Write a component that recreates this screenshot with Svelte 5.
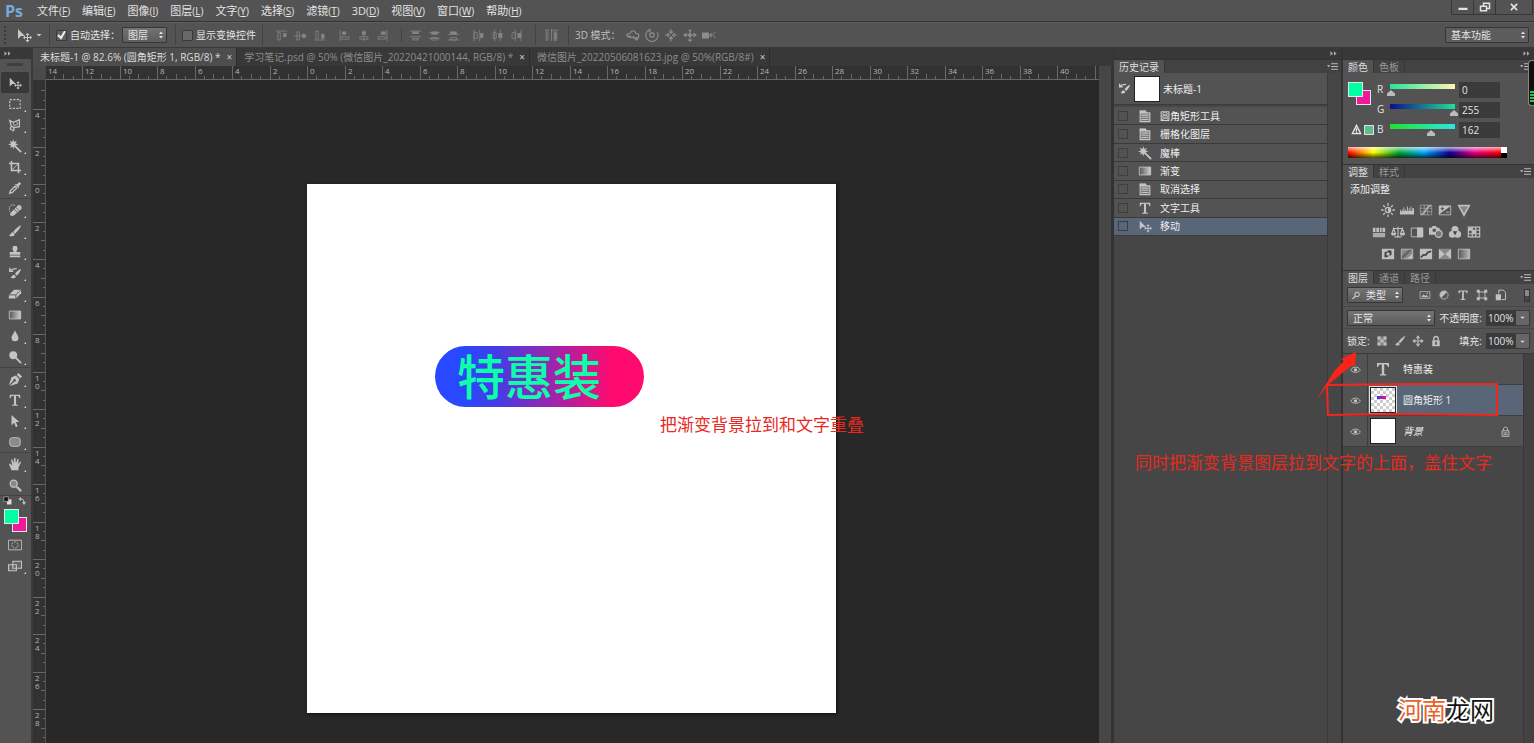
<script>
	const menus = [
		['文件', 'F'],
		['编辑', 'E'],
		['图像', 'I'],
		['图层', 'L'],
		['文字', 'Y'],
		['选择', 'S'],
		['滤镜', 'T'],
		['3D', 'D'],
		['视图', 'V'],
		['窗口', 'W'],
		['帮助', 'H']
	];

	const docs = [
		'未标题-1 @ 82.6% (圆角矩形 1, RGB/8) *',
		'学习笔记.psd @ 50% (微信图片_20220421000144, RGB/8) *',
		'微信图片_20220506081623.jpg @ 50%(RGB/8#)'
	];

	const toolGroups = [
		['move', 'marquee', 'lasso', 'wand', 'crop', 'dropper'],
		['heal', 'brush', 'stamp', 'historyBrush', 'eraser', 'gradient', 'drop', 'dodge'],
		['pen', 'type', 'pathSelect', 'roundRect'],
		['hand', 'zoom']
	];

	const alignGroups = [
		['alTop', 'alMid', 'alBottom'],
		['alLeft', 'alCenter', 'alRight'],
		['diTop', 'diMid', 'diBottom'],
		['diLeft', 'diCenter', 'diRight']
	];
	const modes3d = ['orbit', 'roll', 'pan', 'slide', 'camera'];

	const history = [
		['doc', '圆角矩形工具'],
		['doc', '栅格化图层'],
		['wand', '魔棒'],
		['gradient', '渐变'],
		['doc', '取消选择'],
		['type', '文字工具'],
		['move', '移动']
	];

	const adjustments = [
		['sun', 'levels', 'curves', 'exposure', 'vibrance'],
		['hue', 'balance', 'bw', 'photo', 'mixer', 'lookup'],
		['invert', 'posterize', 'threshold', 'selective', 'gradmap']
	];

	const filters = ['image', 'adjust', 'type', 'shape', 'smart'];
	const locks = ['checker', 'brush', 'cross', 'lock'];

	let channels = $state([
		{ name: 'R', value: 0, from: '#27e39a', to: '#fdf7b4' },
		{ name: 'G', value: 255, from: '#0a0f8c', to: '#1fe09b' },
		{ name: 'B', value: 162, from: '#1fe32d', to: '#2be8e0' }
	]);
	let activeDoc = $state(0);
	let activeTool = $state('move');
	let activeState = $state(6);
	let activeLayer = $state(1);

	// ruler scale: 75px for every four units
	const unit = 18.75;
	const hOrigin = 261;
	const vOrigin = 104;

	function ticks(origin, first, last) {
		const out = [];
		for (let i = first * 4; i <= last * 4; i++) {
			const pos = Math.round(origin + (i * unit) / 4);
			if (pos < -2) continue;
			const major = i % 8 === 0;
			const len = major ? 13 : i % 4 === 0 ? 5 : i % 2 === 0 ? 3 : 0;
			if (len) out.push({ pos, len, label: major && i < last * 4 ? String(Math.abs(i / 4)) : '' });
		}
		return out;
	}
	const hTicks = ticks(hOrigin, -14, 42);
	const vTicks = ticks(vOrigin, -5, 30);

	// every glyph is drawn on a 16 unit grid in currentColor
	const s = 'fill="none" stroke="currentColor"';
	const frame = `<path ${s} d="M1.5 3.5h13v9h-13z"/>`;
	const icons = {
		move: '<path d="M2 2v10l3-3h4z"/><path d="M11.500 6l-2 2h1.500v2H9V8.500L7 10.500l2 2V11h2v2H9.500l2 2.500 2-2.500H12v-2h2v1.500l2-2-2-2V10h-2V8h1.500z"/>',
		marquee: `<path ${s} stroke-width="1.300" stroke-dasharray="2.500 1.500" d="M2 3h12v10H2z"/>`,
		lasso: `<path ${s} stroke-width="1.500" d="M5 13c-3 1-3-2-1-3 3-1 4 4 1 5M4 10L2 3l4 2 7-3v8l-6 1"/><path ${s} d="M6 5l1 4 4-2-1-3"/>`,
		wand: `<path ${s} stroke-width="2" d="M7 7l8 8"/><path d="M6 0l1 3.500L10 2 8.500 5 12 6 8.500 7.500 10 10 7 8.500 6 12 5 8.500 2 10l1.500-2.500L0 6l3.500-1L2 2l3 1.500z"/>`,
		crop: `<path ${s} stroke-width="1.800" d="M4 1v11h11M1 4h11v11"/><path ${s} d="M5 11l7-7"/>`,
		dropper: `<path ${s} stroke-width="1.500" d="M2 14l1-3 5-5 2 2-5 5z"/><path d="M8 4l4 4 1-1-1-1 3-3-2-2-3 3-1-1z"/>`,
		heal: `<path ${s} stroke-dasharray="2 1" d="M8 3C4 0 0 4 2 10"/><path d="M3 11L11 3c2-2 6 1 4 4l-8 7c-3 2-6 0-4-3z"/><path stroke="#535353" d="M7 7l4 4M9 5l4 4"/>`,
		brush: '<path d="M15 1c-4 2-7 5-9 8l2 2c3-3 6-6 7-10zM5.500 9.500C3 9.500 4 12 1 13c3 2 7 1 6.500-1.500z"/>',
		stamp: '<path d="M6 1h4l1 3-1.500 4H14v3H2V8h4.500L5 4zM2 12h12v2H2z"/>',
		historyBrush: `<path d="M15 3c-3 1-6 4-7 6l2 2c2-2 4-4 5-8zM7 10c-2 0-2 2-4 3 2 2 6 1 6-1z"/><path ${s} stroke-width="1.500" d="M2 6c2-3 5-3 8-3M2 2v4h4"/>`,
		eraser: '<path d="M1 9l6-6h8v4l-6 6H1z"/><path stroke="#535353" fill="none" d="M1 9h8v4M9 9l6-6"/>',
		gradient: '<defs><linearGradient id="gr"><stop stop-color="#555"/><stop offset="1" stop-color="#d0d0d0"/></linearGradient></defs><path fill="url(#gr)" stroke="currentColor" d="M1.500 3.500h13v9h-13z"/>',
		drop: '<path d="M8 1c1 4 4 6 4 9a4 4 0 01-8 0c0-3 3-5 4-9z"/>',
		dodge: `<circle cx="6" cy="6" r="4.500"/><path ${s} stroke-width="2" d="M9 9l6 6"/>`,
		pen: '<path d="M1 15l3-9 5-2 4 4-2 5-9 3 5-5a1.500 1.500 0 10-1-1zM10 3l2-2 4 4-2 2z"/>',
		type: '<path d="M2 2h12v4h-1c-.5-2-1-2.800-3.800-2.800V13l2 .5v1H4.800v-1l2-.5V3.200C4 3.200 3.500 4 3 6H2z"/>',
		pathSelect: '<path d="M4 1v12l3-3 2 5 2-1-2-5h4z"/>',
		roundRect: '<rect x="2" y="3" width="12" height="10" rx="3" fill="#8a8a8a" stroke="currentColor"/>',
		hand: '<path d="M4 15L1 8l1.500-.5L5 10 3.500 3 5 2.500 6.500 7 7 1h1.500L9 7l2-5 1.300.5L11.500 8 14 5l1 .8L12 12v3z"/>',
		zoom: `<circle cx="6.500" cy="6.500" r="4" fill="#888" stroke="currentColor" stroke-width="1.500"/><path ${s} stroke-width="2.500" d="M10 10l5 5"/>`,
		doc: `<path fill="#777" stroke="currentColor" stroke-width="1.300" d="M2.500 2.500h6l1 2h4v10h-11z"/><path stroke="currentColor" stroke-width="1.200" d="M4 7h8M4 9.500h8M4 12h8"/><path d="M2 2h7l1 3H2z"/>`,
		alTop: `<path ${s} d="M1 2.500h14M3.500 4.500h3v9h-3z"/><path d="M10 5h4v5h-4z"/>`,
		alMid: `<path ${s} d="M0 8.500h16M3.500 3.500h3v10h-3z"/><path d="M10 6h4v5h-4z"/>`,
		alBottom: `<path ${s} d="M1 13.500h14M3.500 2.500h3v9h-3z"/><path d="M10 6h4v6h-4z"/>`,
		alLeft: `<path ${s} d="M2.500 1v14M4.500 9.500h9v3h-9z"/><path d="M5 3h5v4H5z"/>`,
		alCenter: `<path ${s} d="M8.500 1v14M3.500 9.500h10v3h-10z"/><path d="M6 3h5v4H6z"/>`,
		alRight: `<path ${s} d="M13.500 1v14M2.500 9.500h9v3h-9z"/><path d="M6 3h6v4H6z"/>`,
		diTop: `<path ${s} d="M1 2.500h14M1 9.500h14M4.500 11.500h7v2h-7z"/><path d="M4 3h8v3H4z"/>`,
		diMid: `<path ${s} d="M1 4.500h14M1 11.500h14M4.500 10.500h7v3h-7z"/><path d="M4 3h8v4H4z"/>`,
		diBottom: `<path ${s} d="M1 6.500h14M1 13.500h14M4.500 10.500h7v3h-7z"/><path d="M4 3h8v4H4z"/>`,
		diLeft: `<path ${s} d="M2.500 1v14M9.500 1v14M2.500 4.500h4v7h-4z"/><path d="M10 5h4v6h-4z"/>`,
		diCenter: `<path ${s} d="M4.500 1v14M11.500 1v14M2.500 4.500h4v7h-4z"/><path d="M9 5h5v6H9z"/>`,
		diRight: `<path ${s} d="M6.500 1v14M13.500 1v14M2.500 4.500h4v7h-4z"/><path d="M9 5h5v6H9z"/>`,
		auto: `<path ${s} d="M1 2.500h5M8 2.500h2M12 2.500h4M2.500 2v12h2V4M8.500 1v14M11.500 2v12h3V4"/><path d="M12 5h2v8h-2z"/>`,
		orbit: `<path ${s} stroke-width="1.300" d="M5 11c-6-1-5-5 0-5 1-4 6-3 6 0 5 0 5 5 0 6M3 8c3 4 8 4 12 2M8 9l4 5 2-3"/>`,
		roll: `<circle cx="8" cy="8" r="2.500" ${s} stroke-width="1.300"/><path ${s} stroke-width="1.300" d="M5 2a7 7 0 109 3M7 1L4 3l3 2"/>`,
		pan: `<path ${s} stroke-width="1.300" d="M8 1v5M8 10v5M1 8h5M10 8h5M6 4l2 2 2-2M6 12l2-2 2 2M4 6l2 2-2 2M12 6l-2 2 2 2"/>`,
		slide: `<path d="M8 5l3 3-3 3-3-3zM0 8l4-3v6zM16 8l-4-3v6zM6 2h4L8 5zM5 13h6l-3 3z"/><path ${s} d="M2 8h12M8 2v12"/>`,
		camera: `<path d="M0 5h8v7H0zM8 8l3-3v6z"/><path ${s} d="M16 4l-4 4 4 4"/>`,
		sun: `<circle cx="8" cy="8" r="3" ${s} stroke-width="1.500"/><path d="M8 5a3 3 0 010 6z"/><path ${s} stroke-width="1.500" d="M8 0v3M8 13v3M0 8h3M13 8h3M2.500 2.500l2 2M11.500 11.500l2 2M13.500 2.500l-2 2M4.500 11.500l-2 2"/>`,
		levels: '<path d="M0 13V8h1v2h1V7h1v2h1V5h1v4h1V7h1v2h1V4h1v5h1V6h1v3h1V4h1v5h1V6h2v7z"/>',
		curves: `<path ${s} opacity=".6" d="M1.500 2.500h13v11h-13zM1 6h14M1 10h14M6 2v12M10 2v12"/><path ${s} stroke-width="1.500" d="M2 13c7 0 5-10 12-10"/>`,
		exposure: `<path d="M1 3h14L1 13z"/><path ${s} d="M1.500 3.500h13v10h-13zM9 10.500h4"/><path stroke="#444" d="M3 6.500h4M5 4.500v4"/>`,
		vibrance: `<path d="M3 4h10L8 13z" opacity=".5"/><path ${s} stroke-width="1.800" d="M2 3h12L8 14z"/>`,
		hue: `<path d="M1 3h3v5H1zM5 3h3v5H5zM9 3h2v5H9zM12 3h3v5h-3z"/><path d="M1 9h14v5H1z" opacity=".8"/>`,
		balance: `<path ${s} stroke-width="1.300" d="M8 2v11M4 13.500h8M3 4h10M3 4L1 10h4zM13 4l-2 6h4z"/><path d="M0 9h6l-1 3H1zM10 9h6l-1 3h-4z"/>`,
		bw: `<path d="M8 3h7v11H8z"/><path ${s} d="M1.500 3.500h13v10h-13z"/>`,
		photo: `<path d="M0 3h3l1-2h4l1 2h3v8H0z"/><circle cx="11" cy="10" r="4" fill="#777" stroke="currentColor" stroke-width="1.500"/><circle cx="6" cy="6" r="2" fill="#535353"/>`,
		mixer: '<circle cx="8" cy="5" r="4"/><circle cx="5" cy="10.500" r="4"/><circle cx="11" cy="10.500" r="4"/><path fill="#444" d="M8 12L5.500 7h5z"/>',
		lookup: `<path ${s} stroke-width="1.300" d="M1.500 2.500h13v11h-13zM1 6h14M1 10h14M6 2v12M10 2v12"/><path d="M2 3h4v3H2zM6 6h4v4H6z"/>`,
		invert: `<path d="M1 2h14v12H1z"/><path fill="#444" d="M4 12V6l3-1c3-3 5 0 5-1v5l-3 1c-2 3-5 1-5 2z"/><circle cx="8" cy="8" r="2"/>`,
		posterize: `<path fill="#8a8a8a" stroke="currentColor" d="M1.500 2.500h13v11h-13z"/><path fill="#666" d="M2 10l8-7h4L4 13H2z"/><path d="M8 13l6-5v5z"/>`,
		threshold: `<path d="M1 2h14v12H1z"/><path stroke="#444" stroke-width="2" fill="none" d="M2 12l3-3 3 0 2-3 4-1"/>`,
		selective: `<path d="M1 2h14L8 8zM1 14h14L8 8z" opacity=".5"/><path d="M1 2l7 6-7 6zM15 2L8 8l7 6z"/>`,
		gradmap: '<defs><linearGradient id="gm"><stop stop-color="#555"/><stop offset="1" stop-color="#bbb"/></linearGradient></defs><path fill="url(#gm)" stroke="currentColor" d="M1.500 2.500h13v11h-13z"/>',
		image: `${frame}<path d="M3 11l3-4 2 2 2-1 3 3z"/><circle cx="11" cy="6" r="1"/>`,
		adjust: `<circle cx="8" cy="8" r="5.500"/><path fill="#555" d="M12 4a5.500 5.500 0 01-8 8z"/><circle cx="8" cy="8" r="5.500" ${s}/>`,
		shape: `<path ${s} stroke-width="1.300" d="M4 4h8v8H4z"/><path d="M1 1h4v4H1zM11 1h4v4h-4zM1 11h4v4H1zM11 11h4v4h-4z"/>`,
		smart: `<path ${s} stroke-width="1.300" d="M5 6V1.500h6l3 3V14H9"/><path d="M1 7h7v8H1z"/>`,
		checker: '<path d="M2 2h12v12H2z" opacity=".45"/><path d="M2 2h4v4H2zM10 2h4v4h-4zM6 6h4v4H6zM2 10h4v4H2zM10 10h4v4h-4z"/>',
		cross: `<path ${s} stroke-width="1.300" d="M8 2v12M2 8h12M6 4l2-3 2 3zM6 12l2 3 2-3zM4 6L1 8l3 2zM12 6l3 2-3 2z"/>`,
		lock: `<path d="M3 7h10v8H3z"/><path ${s} stroke-width="1.800" d="M5 7V5c0-4 6-4 6 0v2"/><path fill="#444" d="M7 9h2v4H7z"/>`,
		lockLine: `<path ${s} stroke-width="1.300" d="M3 7h10v8H3zM5 7V4c0-3 6-3 6 0v3M5 10h6M5 12.500h6"/>`,
		eye: `<path ${s} stroke-width="1.300" d="M1 9c3-6 11-6 14 0-3 4-11 4-14 0z"/><circle cx="8" cy="8.500" r="2.500"/>`,
		menu: `<path d="M0 6h5L2.500 9z"/><path ${s} stroke-width="1.500" d="M6 4h10M6 8h10M6 12h10"/>`,
		expand: '<path d="M1 3l6 5-6 5zM9 3l6 5-6 5z"/>',
		swap: `<path ${s} stroke-width="2" d="M5 4c5-1 7 3 7 7"/><path d="M6 0v8L1 4zM8 10h8l-4 6z"/>`,
		defaults: '<path fill="#ddd" d="M7 6h8v9H7z"/><path fill="#111" stroke="#ccc" d="M1.500 1.500h8v8h-8z"/>',
		mask: `<path ${s} d="M.5 2.500h15v11H.5z"/><circle cx="8" cy="8" r="3.500" ${s} stroke-dasharray="2 1"/>`,
		screen: '<path fill="#666" stroke="currentColor" stroke-width="1.200" d="M.6 6.500h9v7h-9zM5.500 2.500h10v8h-10z"/>',
		search: `<circle cx="9" cy="6" r="4" ${s} stroke-width="1.500"/><path ${s} stroke-width="1.800" d="M6 9l-5 5"/>`,
		warn: `<path ${s} stroke-width="2" d="M8 2l6 12H2z"/><path ${s} stroke-width="2" d="M8 6v4M8 11v2"/>`,
		arrows: '<path d="M4 6l4-5 4 5zM4 10l4 5 4-5z"/>',
		down: '<path d="M3 6h10l-5 5z"/>',
		min: '<path d="M2 9h12v3H2z"/>',
		restore: `<path ${s} stroke-width="2" d="M2 7h8v6H2zM6 6V3h8v7h-3"/>`,
		close: `<path ${s} stroke-width="2.500" d="M3 3l10 10M13 3L3 13"/>`
	};
</script>

{#snippet icon(name, size = 14)}
	<svg class="icon" width={size} height={size} viewBox="0 0 16 16" fill="currentColor" aria-hidden="true">
		{@html icons[name]}
	</svg>
{/snippet}

{#snippet panelTabs(names)}
	<div class="panel-tabs">
		{#each names as name, i}
			<button class="panel-tab" class:active={i === 0}>{name}</button>
		{/each}
		<button class="panel-menu" aria-label="面板菜单">{@render icon('menu', 11)}</button>
	</div>
{/snippet}

{#snippet dropdown(cls, label, value)}
	<span class="select {cls}">
		<select aria-label={label}><option>{value}</option></select>
		{@render icon('arrows', 8)}
	</span>
{/snippet}

<div class="app">
	<header class="menubar">
		<span class="logo">Ps</span>
		<nav>
			{#each menus as [name, key]}
				<button>{name}<small>(<u>{key}</u>)</small></button>
			{/each}
		</nav>
		<div class="window-buttons">
			<button aria-label="最小化">{@render icon('min', 12)}</button>
			<button aria-label="还原">{@render icon('restore', 12)}</button>
			<button class="wide" aria-label="关闭">{@render icon('close', 10)}</button>
		</div>
	</header>

	<div class="options">
		<span class="grip"></span>
		<button class="current-tool" aria-label="移动工具">
			{@render icon('move', 16)}{@render icon('down', 8)}
		</button>
		<span class="rule"></span>
		<label class="tick"><input type="checkbox" checked />自动选择：</label>
		{@render dropdown('target', '自动选择', '图层')}
		<span class="rule"></span>
		<label class="tick"><input type="checkbox" />显示变换控件</label>
		<span class="rule"></span>
		<div class="aligns">
			{#each alignGroups as group}
				<div class="icon-row">
					{#each group as name}<button aria-label={name}>{@render icon(name, 13)}</button>{/each}
				</div>
			{/each}
		</div>
		<span class="rule"></span>
		<button class="dim" aria-label="自动对齐">{@render icon('auto', 14)}</button>
		<span class="rule"></span>
		<div class="modes">
			<span>3D 模式：</span>
			{#each modes3d as name}<button aria-label={name}>{@render icon(name, 14)}</button>{/each}
		</div>
		{@render dropdown('workspace', '工作区', '基本功能')}
	</div>

	<main>
		<aside class="toolbox">
			<div class="dock-head">{@render icon('expand', 7)}</div>
			<div class="tool-grip"></div>
			{#each toolGroups as group}
				<div class="tool-group">
					{#each group as name}
						<button
							class="tool"
							class:active={activeTool === name}
							class:more={name !== 'move' && name !== 'zoom'}
							aria-label={name}
							onclick={() => (activeTool = name)}
						>
							{@render icon(name, 14)}
						</button>
					{/each}
				</div>
			{/each}
			<div class="swatch-tools">
				<button aria-label="默认颜色">{@render icon('defaults', 9)}</button>
				<button aria-label="切换颜色">{@render icon('swap', 8)}</button>
			</div>
			<div class="swatches"><i class="bg"></i><i class="fg"></i></div>
			<button class="tool" aria-label="快速蒙版">{@render icon('mask', 14)}</button>
			<button class="tool more" aria-label="屏幕模式">{@render icon('screen', 14)}</button>
		</aside>

		<section class="document">
			<div class="doc-tabs">
				{#each docs as doc, i}
					<div class="doc-tab" class:active={i === activeDoc}>
						<button onclick={() => (activeDoc = i)}>{doc}</button>
						<button class="shut" aria-label="关闭">×</button>
					</div>
				{/each}
			</div>
			<div class="workspace-grid">
				<div class="corner"></div>
				<svg class="ruler-h" aria-hidden="true">
					{#each hTicks as t}
						<path d="M{t.pos + 0.5} {13 - t.len}v{t.len}" />
						{#if t.label}<text x={Math.max(2, t.pos + 3)} y="8">{t.label}</text>{/if}
					{/each}
				</svg>
				<div class="track"></div>
				<svg class="ruler-v" aria-hidden="true">
					{#each vTicks as t}
						<path d="M{13 - t.len} {t.pos + 0.5}h{t.len}" />
						{#each t.label as digit, i}<text x="2" y={t.pos + 9 + i * 8}>{digit}</text>{/each}
					{/each}
				</svg>
				<div class="viewport">
					<div class="artboard">
						<div class="pill">特惠装</div>
					</div>
					<p class="note canvas-note">把渐变背景拉到和文字重叠</p>
				</div>
			</div>
		</section>

		<aside class="history">
			<div class="dock-head right">{@render icon('expand', 7)}</div>
			{@render panelTabs(['历史记录'])}
			<div class="scrolled">
				<div class="snapshot">
					{@render icon('historyBrush', 13)}
					<i class="snap"></i>
					<span>未标题-1</span>
				</div>
				<div class="states">
					{#each history as [glyph, name], i}
						<button class="state" class:active={i === activeState} onclick={() => (activeState = i)}>
							<i class="box"></i>
							{@render icon(glyph, 14)}
							<span>{name}</span>
						</button>
					{/each}
				</div>
			</div>
		</aside>

		<aside class="panels">
			<div class="dock-head right">{@render icon('expand', 7)}</div>
			{@render panelTabs(['颜色', '色板'])}
			<div class="color">
				<div class="color-top">
					<div class="color-left">
						<div class="swatches"><i class="bg"></i><i class="fg"></i></div>
						<div class="gamut">{@render icon('warn', 11)}<i></i></div>
					</div>
					<div class="channels">
						{#each channels as c}
							<div class="channel">
								<label for="ch-{c.name}">{c.name}</label>
								<input
									id="ch-{c.name}"
									type="range"
									min="0"
									max="255"
									bind:value={c.value}
									style="--from:{c.from};--to:{c.to}"
								/>
								<input type="text" aria-label={c.name} bind:value={c.value} />
							</div>
						{/each}
					</div>
				</div>
				<div class="spectrum"><i></i></div>
			</div>

			{@render panelTabs(['调整', '样式'])}
			<div class="adjust">
				<span>添加调整</span>
				{#each adjustments as row}
					<div class="adjust-row">
						{#each row as name}<button aria-label={name}>{@render icon(name, 14)}</button>{/each}
					</div>
				{/each}
			</div>

			{@render panelTabs(['图层', '通道', '路径'])}
			<div class="layer-bar first">
				<span class="select kind">
					<span class="lens">{@render icon('search', 9)}</span>
					<select aria-label="筛选"><option>类型</option></select>
					{@render icon('arrows', 8)}
				</span>
				<div class="filters">
					{#each filters as name}<button aria-label={name}>{@render icon(name, 12)}</button>{/each}
				</div>
				<i class="switch"></i>
			</div>
			<div class="layer-bar">
				{@render dropdown('blend', '混合模式', '正常')}
				<label class="percent">不透明度:<input type="text" value="100%" /></label>
				<button class="drop" aria-label="不透明度">{@render icon('down', 7)}</button>
			</div>
			<div class="layer-bar last">
				<span>锁定:</span>
				<div class="locks">
					{#each locks as name}<button aria-label={name}>{@render icon(name, 12)}</button>{/each}
				</div>
				<label class="percent">填充:<input type="text" value="100%" /></label>
				<button class="drop" aria-label="填充">{@render icon('down', 7)}</button>
			</div>

			<div class="layers">
				<div class="layer-list">
					{#each ['特惠装', '圆角矩形 1', '背景'] as name, i}
						<div class="layer" class:active={i === activeLayer}>
							<button class="eye" aria-label="可见">{@render icon('eye', 11)}</button>
							<button class="layer-main" onclick={() => (activeLayer = i)}>
								{#if i === 0}
									<span class="thumb glyph">{@render icon('type', 16)}</span>
								{:else}
									<span class="thumb" class:alpha={i === 1}></span>
								{/if}
								<span class:italic={i === 2}>{name}</span>
							</button>
							{#if i === 2}{@render icon('lockLine', 11)}{/if}
						</div>
					{/each}
				</div>
				<div class="track"></div>
				<svg class="marks" width="190" height="70" viewBox="0 0 190 70" aria-hidden="true">
					<path fill="#fb2217" d="M43 2L42 16L38 16L16 34L3 50L22 20L31 11L28 9Z" />
					<path fill="none" stroke="#f2261f" stroke-width="2" d="M14 35L100 34H184V65L80 64L15 65Z" />
				</svg>
				<p class="note layer-note">同时把渐变背景图层拉到文字的上面，盖住文字</p>
			</div>
		</aside>
	</main>

	<div class="meter"><i></i></div>
	<div class="watermark"><b>河南</b>龙网</div>
</div>

<style>
	:global(body) {
		background: #535353;
	}

	.app {
		position: relative;
		display: flex;
		flex-direction: column;
		height: 100vh;
		overflow: hidden;
		background: #535353;
		color: #e4e4e4;
		font: 10px/14px 'Open Sans', 'Noto Sans CJK SC', sans-serif;
	}

	button,
	input,
	select {
		margin: 0;
		padding: 0;
		border: 0;
		background: none;
		color: inherit;
		font: inherit;
	}

	button {
		display: flex;
		align-items: center;
		justify-content: center;
		white-space: nowrap;
	}

	.icon {
		display: block;
		flex: none;
	}

	/* menu bar */
	.menubar {
		display: flex;
		align-items: center;
		height: 22px;
		border-bottom: 1px solid #333;
		box-sizing: border-box;
	}

	.logo {
		width: 37px;
		padding-left: 5px;
		box-sizing: border-box;
		color: #78a9d8;
		font: bold 16px/20px 'Open Sans', sans-serif;
	}

	nav {
		display: flex;
		gap: 12px;
		font-size: 11px;
	}

	small {
		font-size: 10px;
	}

	.window-buttons {
		display: flex;
		align-self: flex-start;
		margin: 0 1px 0 auto;
		border: 1px solid #363636;
		border-top: 0;
	}

	.window-buttons button {
		width: 22px;
		height: 14px;
		border-right: 1px solid #363636;
		box-sizing: border-box;
	}

	.window-buttons .wide {
		width: 36px;
		border: 0;
	}

	/* options bar */
	.options {
		display: flex;
		align-items: center;
		height: 26px;
		border-bottom: 1px solid #383838;
		border-top: 1px solid #5e5e5e;
		box-sizing: border-box;
		gap: 6px;
	}

	.grip {
		width: 2px;
		height: 18px;
		margin-left: 4px;
		border-left: 2px dotted #3c3c3c;
		box-sizing: border-box;
	}

	.current-tool {
		gap: 3px;
		margin-left: 4px;
		color: #c8c8c8;
	}

	.rule {
		width: 1px;
		height: 20px;
		background: #424242;
	}

	.tick {
		display: flex;
		align-items: center;
		gap: 3px;
	}

	.tick input {
		appearance: none;
		width: 11px;
		height: 11px;
		border: 1px solid #3a3a3a;
		border-radius: 1px;
		background: #686868;
		box-sizing: border-box;
	}

	.tick input:checked {
		background: #606060
			url("data:image/svg+xml,%3Csvg xmlns='http://www.w3.org/2000/svg' viewBox='0 0 9 9'%3E%3Cpath fill='none' stroke='%23eee' stroke-width='2' d='M1 4l3 3 4-7'/%3E%3C/svg%3E");
	}

	.select {
		position: relative;
		display: flex;
		align-items: center;
		height: 16px;
		border: 1px solid #363636;
		border-radius: 1px;
		background: linear-gradient(#747474, #5c5c5c);
		box-sizing: border-box;
	}

	.select select {
		appearance: none;
		width: 100%;
		height: 14px;
		padding-left: 5px;
		line-height: 14px;
	}

	.select > .icon {
		position: absolute;
		right: 1px;
		pointer-events: none;
	}

	.target {
		width: 45px;
		margin: 0 2px 0 -4px;
	}

	.workspace {
		width: 84px;
		margin: 0 5px 0 auto;
		background: #5c5c5c;
	}

	.aligns {
		display: flex;
		gap: 12px;
		margin: 0 6px;
		color: #858585;
	}

	.icon-row {
		display: flex;
		gap: 6px;
	}

	.icon-row:nth-child(3) {
		padding-left: 7px;
		border-left: 1px solid #424242;
	}

	.dim {
		margin: 0 4px 0 2px;
		color: #858585;
	}

	.modes {
		display: flex;
		gap: 5px;
		color: #8c8c8c;
	}

	.modes span {
		color: #bdbdbd;
	}

	main {
		display: flex;
		flex: 1;
		min-height: 0;
	}

	.dock-head {
		display: flex;
		align-items: center;
		height: 11px;
		padding: 0 4px;
		background: #383838;
		color: #aaa;
	}

	.dock-head.right {
		justify-content: flex-end;
	}

	/* tools */
	.toolbox {
		flex: none;
		width: 31px;
		border-right: 2px solid #3a3a3a;
		background: #535353;
		color: #c4c4c4;
	}

	.tool-grip {
		width: 16px;
		height: 3px;
		margin: 4px 7px 6px;
		background: #3f3f3f;
	}

	.tool-group {
		border-bottom: 1px solid #424242;
	}

	.tool {
		position: relative;
		width: 28px;
		height: 21px;
		margin-left: 1px;
	}

	.tool.active {
		background: #383838;
		border-radius: 2px;
	}

	.tool.more::after {
		content: '';
		position: absolute;
		right: 3px;
		bottom: 2px;
		border: 1px solid;
		border-color: transparent #ddd #ddd transparent;
	}

	.swatch-tools {
		display: flex;
		gap: 6px;
		margin: 0 0 4px 3px;
	}

	.swatches {
		position: relative;
		width: 23px;
		height: 23px;
	}

	.swatches i {
		position: absolute;
		width: 15px;
		height: 15px;
		border: 1px solid #e6e6e6;
		box-sizing: border-box;
	}

	.swatches .fg {
		top: 0;
		left: 0;
		background: #00ffa2;
	}

	.swatches .bg {
		right: 0;
		bottom: 0;
		background: #ef1a9a;
	}

	.toolbox .swatches {
		margin: 0 0 2px 4px;
	}

	/* document window */
	.document {
		display: flex;
		flex: 1;
		flex-direction: column;
		min-width: 0;
	}

	.doc-tabs {
		display: flex;
		height: 18px;
		background: #383838;
		overflow: hidden;
	}

	.doc-tab {
		display: flex;
		align-items: center;
		gap: 6px;
		padding: 0 4px 0 7px;
		border-right: 1px solid #2c2c2c;
		color: #8c8c8c;
	}

	.doc-tab.active {
		background: #4d4d4d;
		color: #dcdcdc;
	}

	.shut {
		color: #ccc;
	}

	.workspace-grid {
		display: grid;
		flex: 1;
		grid-template: 14px 1fr / 13px 1fr 14px;
		min-height: 0;
	}

	.corner {
		background: #4a4a4a;
	}

	.ruler-h,
	.ruler-v {
		display: block;
		width: 100%;
		height: 100%;
		overflow: hidden;
		background: #323232;
		stroke: #686868;
	}

	.ruler-h {
		border-bottom: 1px solid #666;
		box-sizing: border-box;
	}

	.ruler-v {
		border-right: 1px solid #555;
		box-sizing: border-box;
	}

	.ruler-h text,
	.ruler-v text {
		fill: #b4b4b4;
		stroke: none;
		font-size: 8px;
	}

	.track {
		grid-row: 1 / 3;
		grid-column: 3;
		border-right: 2px solid #333;
		background: #464646;
	}

	.viewport {
		position: relative;
		grid-row: 2;
		grid-column: 2;
		background: #282828;
		overflow: hidden;
	}

	.artboard {
		position: absolute;
		left: 261px;
		top: 104px;
		width: 529px;
		height: 529px;
		background: #fff;
		box-shadow: 1px 1px 3px #111;
	}

	.pill {
		position: absolute;
		left: 128px;
		top: 162px;
		width: 209px;
		height: 61px;
		padding-left: 22px;
		border-radius: 31px;
		background: linear-gradient(90deg, #2849ff 12%, #3f3ee8 28%, #ff0a6e 85%);
		box-sizing: border-box;
		color: #0dffab;
		font: 500 48px/57px 'Noto Sans CJK SC', sans-serif;
		white-space: nowrap;
	}

	.note {
		position: absolute;
		margin: 0;
		color: #e8291f;
		font: 17px/20px 'Noto Sans CJK SC', sans-serif;
		white-space: nowrap;
	}

	.canvas-note {
		left: 614px;
		top: 334px;
	}

	/* shared panel pieces */
	.panel-tabs {
		display: flex;
		height: 14px;
		background: #424242;
		border-top: 1px solid #333;
		box-sizing: border-box;
		color: #999;
	}

	.panel-tab {
		padding: 0 5px;
		border-right: 1px solid #363636;
	}

	.panel-tab.active {
		background: #535353;
		color: #ddd;
	}

	.panel-menu {
		margin: 0 3px 0 auto;
		color: #bbb;
	}

	/* history */
	.history {
		display: flex;
		flex: none;
		flex-direction: column;
		width: 229px;
		border-left: 1px solid #333;
		border-right: 1px solid #333;
		box-sizing: border-box;
		background: #464646;
	}

	.scrolled {
		flex: 1;
		margin-right: 13px;
		border-right: 1px solid #3a3a3a;
	}

	.snapshot {
		display: flex;
		align-items: center;
		gap: 3px;
		height: 31px;
		padding-left: 4px;
		border-bottom: 1px solid #3a3a3a;
		background: #535353;
		color: #ccc;
	}

	.snap {
		width: 26px;
		height: 26px;
		border: 1px solid #222;
		background: #fff;
		box-sizing: border-box;
	}

	.snapshot span,
	.state span {
		color: #eee;
	}

	.states {
		display: grid;
		grid-auto-rows: 1fr;
		height: 129px;
		margin-top: 2px;
	}

	.state {
		justify-content: flex-start;
		width: 100%;
		padding-left: 4px;
		border-bottom: 1px solid #3a3a3a;
		background: #535353;
		color: #c4c4c4;
	}

	.state.active {
		background: #596678;
	}

	.box {
		width: 10px;
		height: 10px;
		margin-right: 10px;
		border: 1px solid #3e3e3e;
		box-sizing: border-box;
	}

	.state span {
		margin-left: 8px;
	}

	/* right dock */
	.panels {
		display: flex;
		flex: none;
		flex-direction: column;
		width: 192px;
		border-left: 1px solid #333;
		box-sizing: border-box;
	}

	.color {
		height: 91px;
		padding: 9px 5px 0;
		box-sizing: border-box;
	}

	.color-top {
		display: flex;
		gap: 6px;
		height: 60px;
	}

	.gamut {
		display: flex;
		gap: 2px;
		align-items: center;
		margin: 19px 0 0 3px;
	}

	.gamut i {
		flex: none;
		width: 10px;
		height: 10px;
		border: 1px solid #ddd;
		background: #60bd8e;
		box-sizing: border-box;
	}

	.color-left {
		width: 23px;
	}

	.channel {
		display: flex;
		height: 20px;
	}

	.channel label {
		width: 10px;
	}

	.channel input[type='range'] {
		appearance: none;
		width: 71px;
		height: 14px;
		background: linear-gradient(90deg, var(--from), var(--to)) 3px 2px / 65px 5px no-repeat;
	}

	.channel input[type='range']::-webkit-slider-thumb {
		appearance: none;
		width: 8px;
		height: 6px;
		margin-top: 8px;
		background: #bbb;
		clip-path: polygon(50% 0, 100% 60%, 100% 100%, 0 100%, 0 60%);
	}

	.channel input[type='text'] {
		width: 41px;
		height: 16px;
		margin-left: 1px;
		padding-left: 3px;
		background: #3a3a3a;
		box-sizing: border-box;
	}

	.spectrum {
		display: flex;
		justify-content: flex-end;
		width: 159px;
		height: 11px;
		margin-top: 5px;
		background:
			linear-gradient(rgba(255, 255, 255, 0.7), transparent 50%, rgba(0, 0, 0, 0.7)),
			linear-gradient(90deg, #f00, #ff0 16%, #0a3 32%, #0af 48%, #109 64%, #e08 80%, #f00 96%);
	}

	.spectrum i {
		width: 6px;
		background: linear-gradient(#fff 50%, #000 50%);
	}

	.adjust {
		height: 92px;
		padding: 4px 7px;
		box-sizing: border-box;
		color: #c0c0c0;
	}

	.adjust span {
		display: block;
		margin-bottom: 3px;
		color: #eee;
	}

	.adjust-row {
		display: flex;
		justify-content: center;
		gap: 5px;
		width: 152px;
		height: 22px;
	}

	.layer-bar {
		display: flex;
		align-items: center;
		height: 22px;
		padding: 0 4px;
		border-bottom: 1px solid #484848;
		box-sizing: border-box;
	}

	.layer-bar.first {
		height: 23px;
	}

	.layer-bar.last {
		height: 25px;
		border-color: #3a3a3a;
	}

	.kind {
		width: 56px;
	}

	.lens {
		padding-left: 4px;
	}

	.filters {
		display: flex;
		gap: 7px;
		margin-left: 16px;
		color: #c0c0c0;
	}

	.switch {
		width: 6px;
		height: 13px;
		margin-left: auto;
		border: 1px solid #333;
		background: linear-gradient(#888 50%, #444 50%);
		box-sizing: border-box;
	}

	.blend {
		width: 88px;
	}

	.percent {
		display: flex;
		align-items: center;
		gap: 4px;
		margin-left: auto;
	}

	.percent input {
		width: 29px;
		height: 16px;
		padding-left: 2px;
		background: #3a3a3a;
		box-sizing: border-box;
	}

	.drop {
		width: 15px;
		height: 16px;
		border: 1px solid #3a3a3a;
		background: #666;
		box-sizing: border-box;
	}

	.locks {
		display: flex;
		gap: 6px;
		margin-left: 6px;
		color: #c0c0c0;
	}

	.layers {
		position: relative;
		display: flex;
		flex: 1;
		background: #464646;
	}

	.layer-list {
		flex: 1;
	}

	.layers .track {
		width: 11px;
		border: 0;
		border-left: 1px solid #383838;
		background: #424242;
		box-sizing: border-box;
	}

	.layer {
		display: flex;
		align-items: center;
		height: 31px;
		padding-right: 12px;
		border-bottom: 1px solid #3e3e3e;
		background: #535353;
		box-sizing: border-box;
		color: #c4c4c4;
	}

	.layer.active {
		background: #596678;
	}

	.eye {
		width: 25px;
		height: 30px;
		border-right: 1px solid #3e3e3e;
		background: #535353;
		box-sizing: border-box;
	}

	.layer-main {
		flex: 1;
		justify-content: flex-start;
		gap: 7px;
		padding-left: 2px;
		color: #eee;
	}

	.thumb {
		display: flex;
		align-items: center;
		justify-content: center;
		width: 26px;
		height: 26px;
		border: 1px solid #222;
		background: #fff;
		box-sizing: border-box;
	}

	.thumb.glyph {
		border: 0;
		background: none;
		color: #c4c4c4;
	}

	.thumb.alpha {
		outline: 1px solid #ddd;
		background:
			linear-gradient(90deg, #33f, #f16) 6px 8px / 9px 3px no-repeat,
			repeating-conic-gradient(#ccc 0 25%, #fff 0 50%) 0 0 / 6px 6px;
	}

	.italic {
		font-style: italic;
	}

	.marks {
		position: absolute;
		left: -30px;
		top: -4px;
		pointer-events: none;
	}

	.layer-note {
		right: 42px;
		top: 98px;
	}

	.meter {
		position: absolute;
		right: 0;
		top: 60px;
		display: flex;
		align-items: flex-end;
		width: 6px;
		height: 46px;
		padding: 2px 0 2px 1px;
		border: 1px solid #888;
		border-right: 0;
		border-radius: 4px 0 0 4px;
		background: #111;
		box-sizing: border-box;
	}

	.meter i {
		width: 4px;
		height: 12px;
		background: repeating-linear-gradient(#2fbf5b 0 2px, #111 2px 3px);
	}

	.watermark {
		position: absolute;
		right: 40px;
		bottom: 20px;
		color: #111;
		font: 24px/28px 'Noto Sans CJK SC', sans-serif;
		-webkit-text-stroke: 4px #fff;
		paint-order: stroke fill;
	}

	.watermark b {
		color: #e8622a;
		font-weight: normal;
	}
</style>
